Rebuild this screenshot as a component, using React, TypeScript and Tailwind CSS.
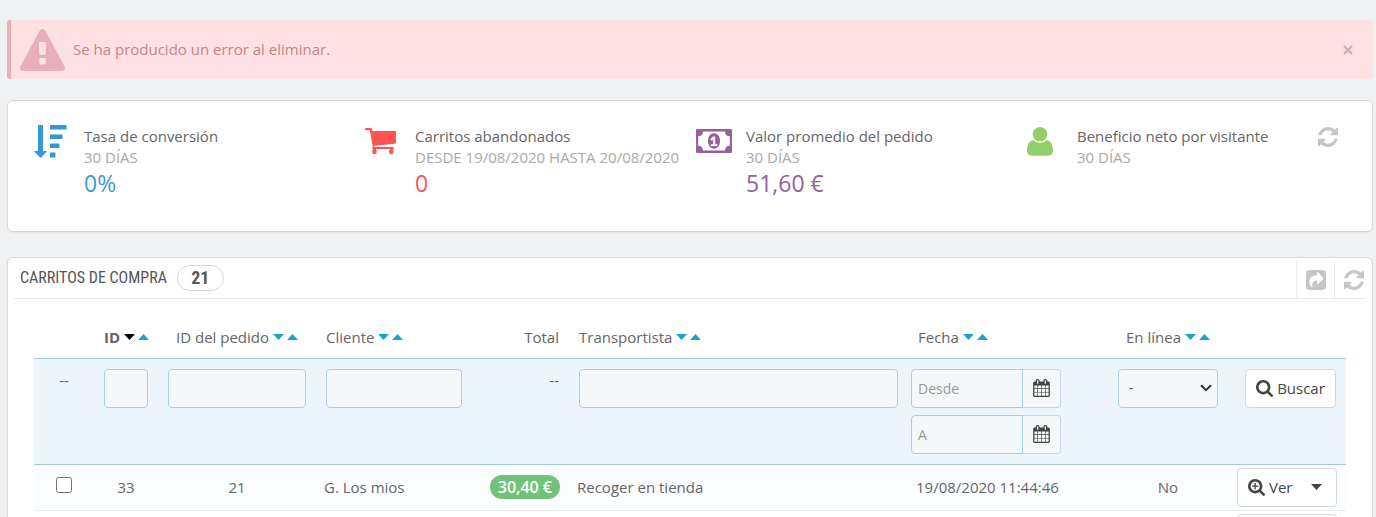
import type { ReactNode } from "react";

interface IconProps {
  className?: string;
}

const SEARCH_RING =
  "M1216 832q0-185-131.5-316.5t-316.5-131.5-316.5 131.5-131.5 316.5 131.5 316.5 316.5 131.5 316.5-131.5 131.5-316.5zm512 832q0 52-38 90t-90 38q-54 0-90-38l-343-342q-179 124-399 124-143 0-273.5-55.5t-225-150-150-225-55.5-273.5 55.5-273.5 150-225 225-150 273.5-55.5 273.5 55.5 225 150 150 225 55.5 273.5q0 220-124 399l343 343q37 37 37 90z";

function WarningIcon({ className }: IconProps) {
  return (
    <svg viewBox="0 0 1792 1664" fill="currentColor" className={className} aria-hidden="true">
      <path d="M1024 1375v-190q0-14-9.5-23.5t-22.5-9.5h-192q-13 0-22.5 9.5t-9.5 23.5v190q0 14 9.5 23.5t22.5 9.5h192q13 0 22.5-9.5t9.5-23.5zm-2-374l18-459q0-12-10-19-13-11-24-11h-220q-11 0-24 11-10 7-10 21l17 457q0 10 10 16.5t24 6.5h185q14 0 23.5-6.5t10.5-16.5zm-14-934l768 1408q35 63-2 126-17 29-46.5 46t-63.5 17h-1536q-34 0-63.5-17t-46.5-46q-37-63-2-126l768-1408q17-31 47-49t65-18 65 18 47 49z" />
    </svg>
  );
}

function RefreshIcon({ className }: IconProps) {
  return (
    <svg viewBox="128 128 1536 1536" fill="currentColor" className={className} aria-hidden="true">
      <path d="M1639 1056q0 5-1 7-64 268-268 434.5t-478 166.5q-146 0-282.5-55t-243.5-157l-129 129q-19 19-45 19t-45-19-19-45v-448q0-26 19-45t45-19h448q26 0 45 19t19 45-19 45l-137 137q71 66 161 102t187 36q134 0 250-65t186-179q11-17 53-117 8-23 30-23h192q13 0 22.5 9.5t9.5 22.5zm25-800v448q0 26-19 45t-45 19h-448q-26 0-45-19t-19-45 19-45l138-138q-148-137-349-137-134 0-250 65t-186 179q-11 17-53 117-8 23-30 23h-199q-13 0-22.5-9.5t-9.5-22.5v-7q65-268 270-434.5t480-166.5q146 0 284 55.5t245 156.5l130-129q19-19 45-19t45 19 19 45z" />
    </svg>
  );
}

function SearchIcon({ className }: IconProps) {
  return (
    <svg viewBox="64 128 1664 1664" fill="currentColor" className={className} aria-hidden="true">
      <path d={SEARCH_RING} />
    </svg>
  );
}

function ZoomInIcon({ className }: IconProps) {
  return (
    <svg viewBox="64 128 1664 1664" fill="currentColor" className={className} aria-hidden="true">
      <path d={SEARCH_RING} />
      <path d="M1088 800v64q0 13-9.5 22.5t-22.5 9.5h-224v224q0 13-9.5 22.5t-22.5 9.5h-64q-13 0-22.5-9.5t-9.5-22.5v-224h-224q-13 0-22.5-9.5t-9.5-22.5v-64q0-13 9.5-22.5t22.5-9.5h224v-224q0-13 9.5-22.5t22.5-9.5h64q13 0 22.5 9.5t9.5 22.5v224h224q13 0 22.5 9.5t9.5 22.5z" />
    </svg>
  );
}

function CalendarIcon({ className }: IconProps) {
  return (
    <svg viewBox="64 0 1664 1792" fill="currentColor" className={className} aria-hidden="true">
      <path d="M192 1664h288v-288h-288v288zm352 0h320v-288h-320v288zm-352-352h288v-320h-288v320zm352 0h320v-320h-320v320zm-352-384h288v-288h-288v288zm736 736h320v-288h-320v288zm-384-736h320v-288h-320v288zm768 736h288v-288h-288v288zm-384-352h320v-320h-320v320zm-352-864v-288q0-13-9.5-22.5t-22.5-9.5h-64q-13 0-22.5 9.5t-9.5 22.5v288q0 13 9.5 22.5t22.5 9.5h64q13 0 22.5-9.5t9.5-22.5zm736 864h288v-320h-288v320zm-384-384h320v-288h-320v288zm384 0h288v-288h-288v288zm32-480v-288q0-13-9.5-22.5t-22.5-9.5h-64q-13 0-22.5 9.5t-9.5 22.5v288q0 13 9.5 22.5t22.5 9.5h64q13 0 22.5-9.5t9.5-22.5zm384-64v1280q0 52-38 90t-90 38h-1408q-52 0-90-38t-38-90v-1280q0-52 38-90t90-38h128v-96q0-66 47-113t113-47h64q66 0 113 47t47 113v96h384v-96q0-66 47-113t113-47h64q66 0 113 47t47 113v96h128q52 0 90 38t38 90z" />
    </svg>
  );
}

function ShareIcon({ className }: IconProps) {
  return (
    <svg viewBox="0 0 20 20" fill="currentColor" fillRule="evenodd" className={className} aria-hidden="true">
      <path d="M3.8 0h12.4A3.8 3.8 0 0 1 20 3.8v12.4a3.8 3.8 0 0 1-3.8 3.8H3.8A3.8 3.8 0 0 1 0 16.2V3.8A3.8 3.8 0 0 1 3.8 0zM11 2.7v2.6C6.5 5.3 3.4 7.5 3.4 11.8c0 2.1 1 4 2.5 5.4.4.3.8 0 .6-.5-.9-3.5.2-6 4.500-6v2.600c0 .7.700 1 1.200.5l4.900-4.700c.4-.4.4-.8 0-1.200l-4.900-5.700c-.5-.5-1.200-.2-1.200.5z" />
    </svg>
  );
}

function SortAmountIcon() {
  return (
    <svg viewBox="0 0 33 34" fill="currentColor" className="h-[34px] w-[33px]" aria-hidden="true">
      <path d="M4.500 1h4q.5 0 .5.500V27h3.200q.9 0 .4.800l-5.500 5.700q-.5.400-1 0L.4 27.800q-.5-.8.4-.8H4V1.500q0-.5.500-.500zM16.500 1h15.500q.5 0 .5.500v3.500q0 .5-.500.500H16.500q-.5 0-.5-.5V1.500q0-.5.500-.5zM16.500 10.500H28q.5 0 .5.500v3.500q0 .5-.5.500H16.500q-.5 0-.5-.5V11q0-.5.500-.5zM16.500 19.500h8.500q.5 0 .5.500v3.500q0 .5-.5.500h-8.500q-.5 0-.5-.5V20q0-.5.500-.5zM16.500 28.500H21q.5 0 .5.500v4q0 .5-.5.500h-4.500q-.5 0-.5-.5v-4q0-.5.500-.5z" />
    </svg>
  );
}

function CartIcon() {
  return (
    <svg viewBox="0 0 31 27" fill="currentColor" className="h-[27px] w-[31px]" aria-hidden="true">
      <path d="M.8 0h5q1 0 1.200 1l.4 2h22.400q1.200 0 1.200 1.200v10.300q0 1-1 1.200L9.300 17.800l.3 1.300H28q1 0 1 1t-1 1H8.500q-1.100 0-1.100-1.100l.4-1.500L4.800 2.200H.8Q0 2.200 0 1.100T.8 0z" />
      <circle cx="9.500" cy="23.800" r="2.400" />
      <circle cx="26.200" cy="23.800" r="2.400" />
      <path d="M8 20h3v3H8zM25 20h3v3h-3z" />
    </svg>
  );
}

function MoneyIcon() {
  return (
    <svg viewBox="0 0 36 24" fill="currentColor" fillRule="evenodd" className="h-[24px] w-[36px]" aria-hidden="true">
      <path d="M1 0h34q1 0 1 1v22q0 1-1 1H1q-1 0-1-1V1q0-1 1-1zM7 2.500A5 5 0 0 1 2.200 7.300v9.400A5 5 0 0 1 7 21.500h22a5 5 0 0 1 4.800-4.800V7.300A5 5 0 0 1 29 2.500z" />
      <path d="M18 4.300c3.700 0 6 3.500 6 7.700s-2.300 7.700-6 7.700-6-3.500-6-7.700 2.300-7.700 6-7.700zM17.200 7.500l-3 2.700 1.300 1.500 1.500-1.200v4.700h-2.200v1.800h6.600v-1.800h-2.200V7.500z" />
    </svg>
  );
}

function UserIcon() {
  return (
    <svg viewBox="0 0 26 29" fill="currentColor" className="h-[29px] w-[26px]" aria-hidden="true">
      <circle cx="13" cy="7.300" r="7.300" />
      <path d="M6.600 13.200A9.300 9.300 0 0 0 13 15.800a9.300 9.300 0 0 0 6.400-2.600c4.600.1 6.600 4.900 6.600 10.400 0 3.200-2 5.200-4.700 5.200H4.700C2 28.800 0 26.800 0 23.600c0-5.500 2-10.300 6.600-10.400z" />
    </svg>
  );
}

function Caret({ up, className }: { up?: boolean; className?: string }) {
  return (
    <svg viewBox="0 0 11 6" fill="currentColor" className={`h-[6px] w-[11px] ${className ?? ""}`} aria-hidden="true">
      <path d={up ? "M5.500 0 11 6H0z" : "M0 0h11L5.500 6z"} />
    </svg>
  );
}

interface KpiProps {
  icon: ReactNode;
  title: string;
  subtitle: string;
  value?: string;
  valueClass?: string;
  iconClass: string;
  children?: ReactNode;
}

function Kpi({ icon, title, subtitle, value, valueClass, iconClass, children }: KpiProps) {
  return (
    <section className="flex min-w-0">
      <div className={`flex h-[34px] w-[50px] shrink-0 items-center ${iconClass}`}>{icon}</div>
      <div className="pt-0.5 whitespace-nowrap">
        <h2 className="leading-[21px]">{title}</h2>
        <p className="leading-[21px] text-[#a9a9a9]">{subtitle}</p>
        {value && <p className={`text-[23px] leading-[30px] ${valueClass}`}>{value}</p>}
      </div>
      {children}
    </section>
  );
}

function SortHeader({ label, active }: { label: string; active?: boolean }) {
  return (
    <span className="inline-flex items-center gap-1 whitespace-nowrap">
      <span className={active ? "font-bold" : ""}>{label}</span>
      <span className="flex gap-[3px]">
        <button type="button" aria-label={`Ordenar ${label} descendente`}>
          <Caret className={active ? "text-black" : "text-[#1ba3d0]"} />
        </button>
        <button type="button" aria-label={`Ordenar ${label} ascendente`}>
          <Caret up className="text-[#1ba3d0]" />
        </button>
      </span>
    </span>
  );
}

function FilterInput({ label }: { label: string }) {
  return (
    <input
      type="text"
      aria-label={label}
      className="block h-[39px] w-full rounded border border-[#a9cfe4] bg-[#f5f8f9] px-1.5"
    />
  );
}

function DateFilter({ placeholder }: { placeholder: string }) {
  return (
    <div className="flex w-[150px]">
      <input
        type="text"
        aria-label={`Fecha ${placeholder}`}
        placeholder={placeholder}
        className="h-[39px] w-[112px] rounded-l border border-[#a9cfe4] bg-[#f5f8f9] px-1.5 text-sm placeholder:text-[#999]"
      />
      <button
        type="button"
        aria-label="Abrir calendario"
        className="flex h-[39px] flex-1 items-center justify-center rounded-r border border-l-0 border-[#c0d9e4] bg-[#f5f8f9] text-[#444]"
      >
        <CalendarIcon className="h-[18px] w-[17px]" />
      </button>
    </div>
  );
}

function RowActions({ label }: { label?: string }) {
  return (
    <div className="ml-auto flex h-[39px] w-[100px] rounded border border-[#d3d8db] bg-white text-[#444]">
      <button type="button" aria-label="Ver" className="flex items-center gap-1 pl-2.5">
        <ZoomInIcon className="size-[17px]" />
        {label}
      </button>
      <button type="button" aria-label="Más acciones" className="flex flex-1 items-center justify-center pl-1">
        <Caret />
      </button>
    </div>
  );
}

export default function App() {
  return (
    <main className="h-screen overflow-hidden bg-[#eff1f2] pt-5 pr-[3px] pl-[7px] font-['Open_Sans',sans-serif] text-[15px] text-[#666]">
      <div
        role="alert"
        className="flex h-[59px] items-center rounded-[3px] border-l-4 border-[#e7b0b6] bg-[#ffe1e3] pl-[9px] text-[#c58587]"
      >
        <WarningIcon className="h-[42px] w-[45px] text-[#e7b0b6]" />
        <p className="ml-2 flex-1">Se ha producido un error al eliminar.</p>
        <button type="button" aria-label="Cerrar" className="mr-5 text-[#c9aeb0]">
          <svg viewBox="0 0 10 10" className="size-[10px]" fill="none" stroke="currentColor" strokeWidth="2.200">
            <path d="M1 1l8 8M9 1L1 9" />
          </svg>
        </button>
      </div>

      <div className="mt-[21px] grid h-[132px] grid-cols-4 rounded-md border border-[#d3d8db] bg-white pt-[23px] pr-3.5 pl-[26px] shadow-xs">
        <Kpi
          icon={<SortAmountIcon />}
          iconClass="text-[#3498d1]"
          title="Tasa de conversión"
          subtitle="30 DÍAS"
          value="0%"
          valueClass="text-[#3d9bcc]"
        />
        <Kpi
          icon={<CartIcon />}
          iconClass="text-[#ff5450]"
          title="Carritos abandonados"
          subtitle="DESDE 19/08/2020 HASTA 20/08/2020"
          value="0"
          valueClass="text-[#ee5a5a]"
        />
        <Kpi
          icon={<MoneyIcon />}
          iconClass="text-[#95609c]"
          title="Valor promedio del pedido"
          subtitle="30 DÍAS"
          value="51,60 €"
          valueClass="text-[#95609c]"
        />
        <Kpi
          icon={<UserIcon />}
          iconClass="text-[#92cf6b]"
          title="Beneficio neto por visitante"
          subtitle="30 DÍAS"
        >
          <button type="button" aria-label="Actualizar indicadores" className="mr-5 ml-auto self-start pt-[3px] text-[#c6c6c6]">
            <RefreshIcon className="size-5" />
          </button>
        </Kpi>
      </div>

      <div className="mt-[25px] rounded-md border border-[#d3d8db] bg-white px-1.5 pb-6 shadow-xs">
        <header className="flex h-[41px] items-center border-b border-[#e6e9eb] pl-1.5 font-['Ubuntu_Condensed','Roboto_Condensed','Open_Sans_Condensed',Roboto,sans-serif]">
          <h1 className="text-base text-[#555]">CARRITOS DE COMPRA</h1>
          <span className="ml-2.5 flex h-[26px] w-[47px] items-center justify-center rounded-full border border-[#d8d8d8] text-lg font-bold text-[#555]">
            21
          </span>
          <div className="ml-auto flex h-[37px] self-end text-[#c6c6c6]">
            <button type="button" aria-label="Exportar" className="w-[38px] border-l border-[#eaedef] pl-[9px]">
              <ShareIcon className="size-5" />
            </button>
            <button type="button" aria-label="Actualizar lista" className="w-8 border-l border-[#eaedef] pl-[9px]">
              <RefreshIcon className="size-5" />
            </button>
          </div>
        </header>

        <div className="mt-[19px] px-5">
          <table className="w-full table-fixed border-collapse text-left">
            <colgroup>
              <col className="w-[60px]" />
              <col className="w-[64px]" />
              <col className="w-[158px]" />
              <col className="w-[156px]" />
              <col className="w-[97px]" />
              <col />
              <col className="w-[200px]" />
              <col className="w-[120px]" />
              <col className="w-[118px]" />
            </colgroup>
            <thead>
              <tr className="h-10 border-b border-[#a0cbdf] *:px-2.5 *:pb-0.5 *:font-normal">
                <td />
                <th scope="col" className="text-center">
                  <SortHeader label="ID" active />
                </th>
                <th scope="col" className="text-center">
                  <SortHeader label="ID del pedido" />
                </th>
                <th scope="col">
                  <SortHeader label="Cliente" />
                </th>
                <th scope="col" className="text-right">
                  Total
                </th>
                <th scope="col">
                  <SortHeader label="Transportista" />
                </th>
                <th scope="col">
                  <SortHeader label="Fecha" />
                </th>
                <th scope="col" className="text-center">
                  <SortHeader label="En línea" />
                </th>
                <td />
              </tr>
              <tr className="h-[106px] border-b border-[#a0cbdf] bg-[#ebf5fb] align-top *:py-2.5">
                <td className="text-center">--</td>
                <td className="px-2.5">
                  <FilterInput label="ID" />
                </td>
                <td className="px-2.5">
                  <FilterInput label="ID del pedido" />
                </td>
                <td className="px-2.5">
                  <FilterInput label="Cliente" />
                </td>
                <td className="px-2.5 text-right">--</td>
                <td className="px-2.5">
                  <FilterInput label="Transportista" />
                </td>
                <td className="pl-[3px]">
                  <div className="flex flex-col gap-[7px]">
                    <DateFilter placeholder="Desde" />
                    <DateFilter placeholder="A" />
                  </div>
                </td>
                <td className="px-2.5">
                  <div className="grid items-center">
                    <select
                      aria-label="En línea"
                      className="col-start-1 row-start-1 h-[39px] w-full appearance-none rounded border border-[#a9cfe4] bg-[#f5f8f9] pl-2.5 text-sm text-[#555]"
                    >
                      <option>-</option>
                      <option>Sí</option>
                      <option>No</option>
                    </select>
                    <svg
                      viewBox="0 0 12 8"
                      fill="none"
                      stroke="#333"
                      strokeWidth="2"
                      className="pointer-events-none col-start-1 row-start-1 mr-1.5 h-2 w-3 justify-self-end"
                      aria-hidden="true"
                    >
                      <path d="M1 1.200 6 6.200l5-5" />
                    </svg>
                  </div>
                </td>
                <td className="px-2.5">
                  <button
                    type="button"
                    className="ml-auto flex h-[39px] w-[91px] items-center justify-center gap-1 rounded border border-[#d3d8db] bg-white text-[#444]"
                  >
                    <SearchIcon className="size-[17px]" />
                    Buscar
                  </button>
                </td>
              </tr>
            </thead>
            <tbody>
              <tr className="h-[46px] border-b border-[#eaedef] bg-[#fcfdfe]">
                <td className="text-center">
                  <input type="checkbox" aria-label="Seleccionar carrito 33" className="mx-auto mb-1 block size-4" />
                </td>
                <td className="px-2 text-center">33</td>
                <td className="px-2 text-center">21</td>
                <td className="px-2">G. Los mios</td>
                <td className="px-[9px] text-right">
                  <span className="inline-block rounded-full bg-[#72c279] px-2 text-base leading-6 font-semibold text-white">
                    30,40 €
                  </span>
                </td>
                <td className="px-2">Recoger en tienda</td>
                <td className="px-2">19/08/2020 11:44:46</td>
                <td className="px-2 text-center">No</td>
                <td className="px-[9px]">
                  <RowActions label="Ver" />
                </td>
              </tr>
              <tr className="h-[46px] border-b border-[#eaedef]">
                <td colSpan={8} />
                <td className="px-[9px]">
                  <RowActions />
                </td>
              </tr>
            </tbody>
          </table>
        </div>
      </div>
    </main>
  );
}
